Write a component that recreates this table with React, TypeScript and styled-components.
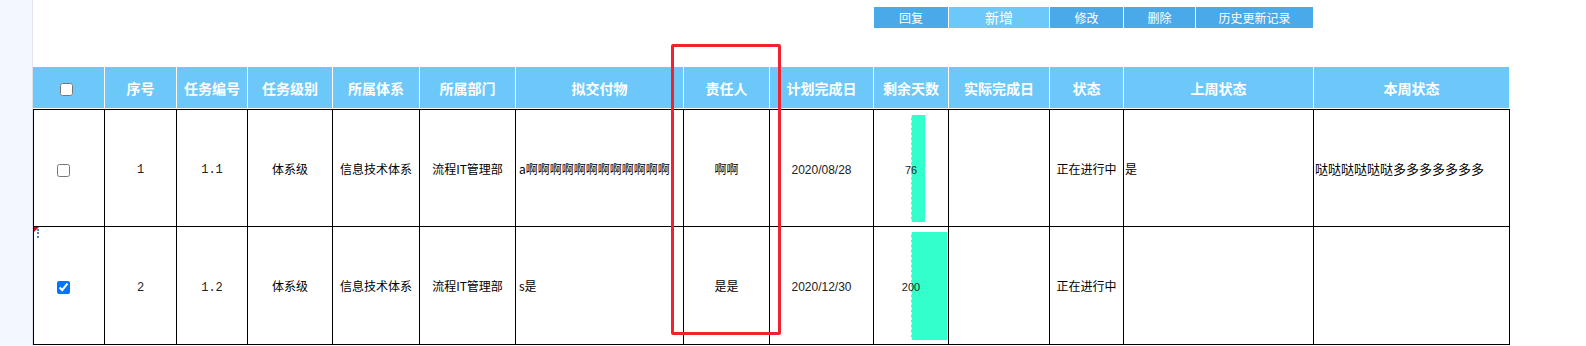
import styled, { createGlobalStyle } from "styled-components";

const GlobalStyle = createGlobalStyle`
    html,
    body {
        margin: 0;
        padding: 0;
        background: #fff;
    }
    body {
        font-family: "Noto Sans CJK SC", "Noto Sans", sans-serif;
        font-size: 12px;
        color: #000;
    }
    * {
        box-sizing: border-box;
    }
`;

const Page = styled.div`
    position: relative;
    display: flex;
    width: 1586px;
    height: 346px;
    overflow: hidden;
`;

const Sidebar = styled.div`
    width: 33px;
    flex: none;
    background: #f3f7fe;
    border-right: 1px solid #dde3ef;
`;

const Main = styled.div`
    flex: 1;
    display: flex;
    flex-direction: column;
`;

const Toolbar = styled.div`
    display: flex;
    gap: 1px;
    height: 28px;
    padding: 7px 0 0 841px;
    margin-bottom: 39px;
`;

const ToolButton = styled.button<{ $active?: boolean; $w: number }>`
    width: ${(p) => p.$w}px;
    height: 21px;
    border: 0;
    padding: 0;
    background: ${(p) => (p.$active ? "#6bc8f8" : "#4aa9e8")};
    color: #fff;
    font-family: inherit;
    font-size: ${(p) => (p.$active ? 14 : 12)}px;
    line-height: 21px;
`;

const Grid = styled.table`
    border-collapse: separate;
    border-spacing: 0;
    table-layout: fixed;
    width: 1477px;
`;

const Col = styled.col<{ $w: number }>`
    width: ${(p) => p.$w}px;
`;

const HeadCell = styled.th<{ $pr?: number }>`
    height: 42px;
    padding: 0 ${(p) => p.$pr ?? 0}px 0 0;
    background: #6bc8f8;
    color: #fff;
    font-size: 14px;
    font-weight: 700;
    text-align: center;
    border-right: 1px solid #fff;
    border-bottom: 1px solid #fff;
    white-space: nowrap;
    overflow: hidden;
`;

const Row = styled.tr`
    &:first-child td {
        border-top: 1px solid #000;
        height: 118px;
    }
`;

const Cell = styled.td<{ $indent?: number; $pr?: number; $size?: number }>`
    position: relative;
    height: 118px;
    padding: 0 ${(p) => p.$pr ?? 0}px 0 ${(p) => p.$indent ?? 0}px;
    text-align: ${(p) => (p.$indent !== undefined ? "left" : "center")};
    border-right: 1px solid #000;
    border-bottom: 1px solid #000;
    white-space: nowrap;
    overflow: hidden;
    font-size: ${(p) => p.$size ?? 12}px;

    &:first-child {
        border-left: 1px solid #000;
    }
`;

const Check = styled.input`
    width: 13px;
    height: 13px;
    margin: 0;
    vertical-align: middle;
`;

const Mono = styled.span`
    font-family: "Liberation Mono", monospace;
    font-size: 12px;
    color: #222;
`;

const DateText = styled.span`
    font-family: "Liberation Sans", Arial, sans-serif;
    font-size: 12px;
    color: #222;
`;

const DaysText = styled.span`
    position: relative;
    z-index: 1;
    font-family: "Liberation Sans", Arial, sans-serif;
    font-size: 11px;
    color: #222;
`;

const DaysBar = styled.div`
    position: absolute;
    left: 50%;
    top: 5px;
    bottom: 4px;
    background: #33ffcc;
    border-left: 1px dashed #d5f5ee;
`;

const Marker = styled.span`
    position: absolute;
    left: 0;
    top: 0;
    width: 0;
    height: 0;
    border-top: 5px solid #c8101a;
    border-right: 5px solid transparent;
`;

const MarkerDots = styled.span`
    position: absolute;
    left: 3px;
    top: 2px;
    width: 2px;
    height: 9px;
    border-left: 2px dotted #5c7fb8;
`;

const Annotation = styled.div`
    position: absolute;
    left: 671px;
    top: 44px;
    width: 110px;
    height: 291px;
    border: 3px solid #f0222d;
    border-radius: 2px;
    pointer-events: none;
`;

const buttons = [
    { label: "回复", w: 74 },
    { label: "新增", w: 100, active: true },
    { label: "修改", w: 73 },
    { label: "删除", w: 71 },
    { label: "历史更新记录", w: 117 },
];

const columns = [
    { title: "", w: 72 },
    { title: "序号", w: 72 },
    { title: "任务编号", w: 71 },
    { title: "任务级别", w: 85 },
    { title: "所属体系", w: 87 },
    { title: "所属部门", w: 96 },
    { title: "拟交付物", w: 168 },
    { title: "责任人", w: 86 },
    { title: "计划完成日", w: 104 },
    { title: "剩余天数", w: 75 },
    { title: "实际完成日", w: 101 },
    { title: "状态", w: 74 },
    { title: "上周状态", w: 190 },
    { title: "本周状态", w: 196 },
];

const rows = [
    {
        id: 1,
        code: "1.1",
        level: "体系级",
        system: "信息技术体系",
        dept: "流程IT管理部",
        deliverable: "a啊啊啊啊啊啊啊啊啊啊啊啊",
        owner: "啊啊",
        plan: "2020/08/28",
        days: 76,
        actual: "",
        status: "正在进行中",
        last: "是",
        current: "哒哒哒哒哒哒多多多多多多多",
        checked: false,
    },
    {
        id: 2,
        code: "1.2",
        level: "体系级",
        system: "信息技术体系",
        dept: "流程IT管理部",
        deliverable: "s是",
        owner: "是是",
        plan: "2020/12/30",
        days: 200,
        actual: "",
        status: "正在进行中",
        last: "",
        current: "",
        checked: true,
    },
];

export default function App() {
    return (
        <>
            <GlobalStyle />
            <Page>
                <Sidebar />
                <Main>
                    <Toolbar>
                        {buttons.map((b) => (
                            <ToolButton key={b.label} $w={b.w} $active={b.active}>
                                {b.label}
                            </ToolButton>
                        ))}
                    </Toolbar>
                    <Grid>
                        <colgroup>
                            {columns.map((c, i) => (
                                <Col key={i} $w={c.w} />
                            ))}
                        </colgroup>
                        <thead>
                            <tr>
                                {columns.map((c, i) =>
                                    i === 0 ? (
                                        <HeadCell key={i} $pr={4}>
                                            <Check type="checkbox" readOnly />
                                        </HeadCell>
                                    ) : (
                                        <HeadCell key={i}>{c.title}</HeadCell>
                                    )
                                )}
                            </tr>
                        </thead>
                        <tbody>
                            {rows.map((r, index) => (
                                <Row key={r.id}>
                                    <Cell $pr={11}>
                                        {index === 1 && (
                                            <>
                                                <Marker />
                                                <MarkerDots />
                                            </>
                                        )}
                                        <Check
                                            type="checkbox"
                                            checked={r.checked}
                                            readOnly
                                        />
                                    </Cell>
                                    <Cell>
                                        <Mono>{r.id}</Mono>
                                    </Cell>
                                    <Cell>
                                        <Mono>{r.code}</Mono>
                                    </Cell>
                                    <Cell>{r.level}</Cell>
                                    <Cell>{r.system}</Cell>
                                    <Cell>{r.dept}</Cell>
                                    <Cell $indent={3}>{r.deliverable}</Cell>
                                    <Cell>{r.owner}</Cell>
                                    <Cell>
                                        <DateText>{r.plan}</DateText>
                                    </Cell>
                                    <Cell>
                                        <DaysBar style={{ width: r.days * 0.18 }} />
                                        <DaysText>{r.days}</DaysText>
                                    </Cell>
                                    <Cell>{r.actual}</Cell>
                                    <Cell>{r.status}</Cell>
                                    <Cell $indent={1}>{r.last}</Cell>
                                    <Cell $indent={1} $size={13}>
                                        {r.current}
                                    </Cell>
                                </Row>
                            ))}
                        </tbody>
                    </Grid>
                </Main>
                <Annotation />
            </Page>
        </>
    );
}
